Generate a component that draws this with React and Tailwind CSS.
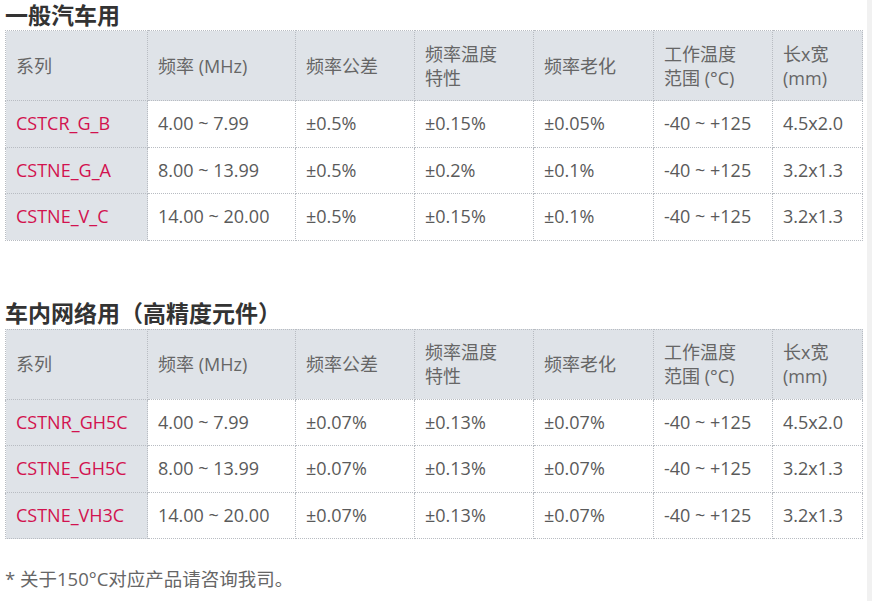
const cols = [142, 148, 119, 119, 120, 119, 90]

const heads = [
  ['系列'],
  ['频率 (MHz)'],
  ['频率公差'],
  ['频率温度', '特性'],
  ['频率老化'],
  ['工作温度', '范围 (°C)'],
  ['长x宽', '(mm)'],
]

const general = [
  ['CSTCR_G_B', '4.00 ~ 7.99', '±0.5%', '±0.15%', '±0.05%', '-40 ~ +125', '4.5x2.0'],
  ['CSTNE_G_A', '8.00 ~ 13.99', '±0.5%', '±0.2%', '±0.1%', '-40 ~ +125', '3.2x1.3'],
  ['CSTNE_V_C', '14.00 ~ 20.00', '±0.5%', '±0.15%', '±0.1%', '-40 ~ +125', '3.2x1.3'],
]

const network = [
  ['CSTNR_GH5C', '4.00 ~ 7.99', '±0.07%', '±0.13%', '±0.07%', '-40 ~ +125', '4.5x2.0'],
  ['CSTNE_GH5C', '8.00 ~ 13.99', '±0.07%', '±0.13%', '±0.07%', '-40 ~ +125', '3.2x1.3'],
  ['CSTNE_VH3C', '14.00 ~ 20.00', '±0.07%', '±0.13%', '±0.07%', '-40 ~ +125', '3.2x1.3'],
]

function SpecTable({ rows }) {
  return (
    <table className="border-collapse table-fixed w-[857px] text-[18px] text-[#5a5a5a]">
      <colgroup>
        {cols.map((w, i) => (
          <col key={i} style={{ width: w }} />
        ))}
      </colgroup>
      <thead>
        <tr className="h-[70px] bg-[#dfe3e8]">
          {heads.map((lines, i) => (
            <th key={i} className="border border-dotted border-[#b8bcc2] px-[10px] text-left font-normal align-middle leading-[24px] text-[#666]">
              {lines.map((l) => (
                <div key={l}>{l}</div>
              ))}
            </th>
          ))}
        </tr>
      </thead>
      <tbody>
        {rows.map((r) => (
          <tr key={r[0]} className="h-[46.5px]">
            {r.map((c, i) => (
              <td
                key={i}
                className={
                  i === 0
                    ? 'border border-dotted border-[#b8bcc2] px-[10px] bg-[#dfe3e8] text-[#d2124f]'
                    : 'border border-dotted border-[#b8bcc2] px-[10px] bg-white'
                }
              >
                {c}
              </td>
            ))}
          </tr>
        ))}
      </tbody>
    </table>
  )
}

export default function App() {
  return (
    <div className="flex w-[872px] h-[601px] bg-white overflow-hidden" style={{ fontFamily: '"Open Sans", "Noto Sans CJK SC", sans-serif' }}>
      <div className="flex-1 pl-[5px]">
        <h2 className="h-[30px] pt-[1px] text-[23px] font-bold leading-[28px] text-[#333]">一般汽车用</h2>
        <SpecTable rows={general} />
        <h2 className="mt-[58px] h-[30px] text-[23px] font-bold leading-[28px] text-[#333]">车内网络用（高精度元件）</h2>
        <SpecTable rows={network} />
        <p className="mt-[26px] text-[18.5px] text-[#666]">* 关于150°C对应产品请咨询我司。</p>
      </div>
      <div className="w-[5px] bg-[#f1f1f1]" />
    </div>
  )
}
